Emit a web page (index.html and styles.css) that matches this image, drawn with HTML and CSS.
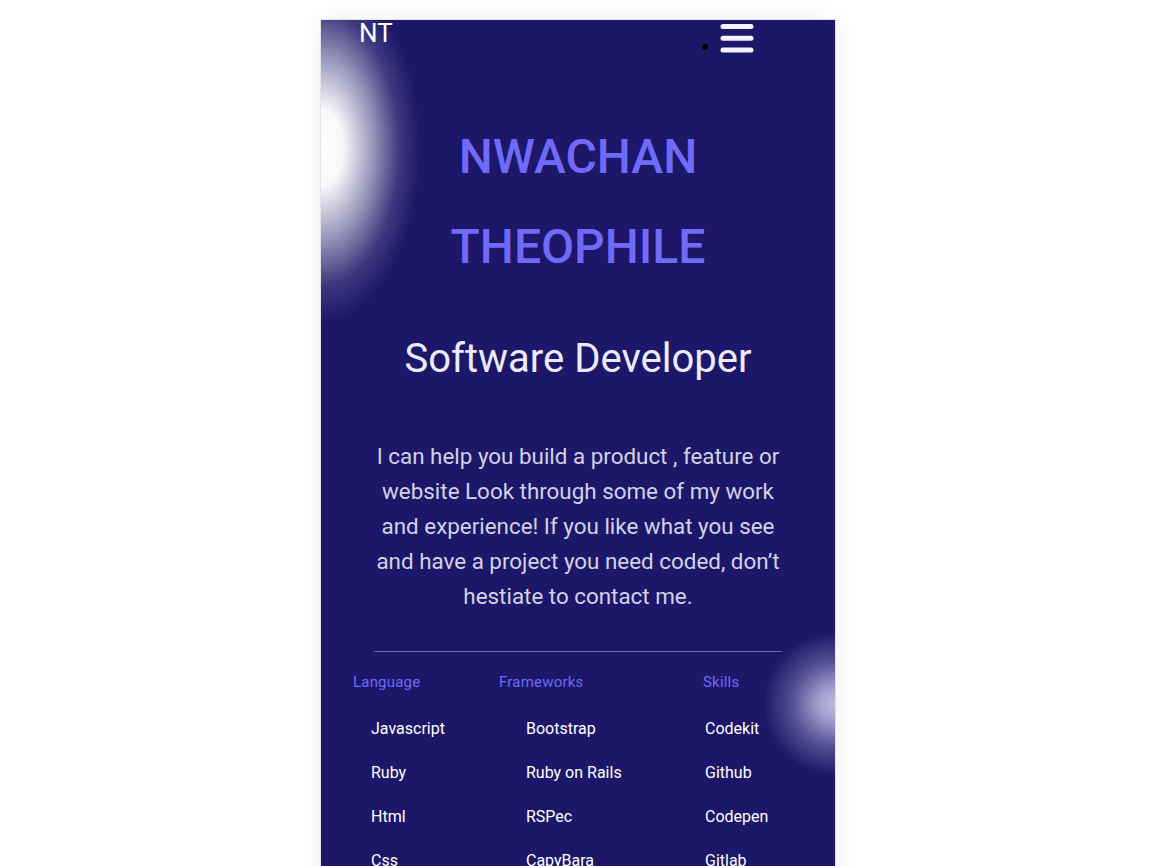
FILE: index.html
```html
<!DOCTYPE html>
<html lang="en">
<head>
<meta charset="utf-8">
<title>Nwachan Theophile</title>
<link rel="stylesheet" href="styles.css">
</head>
<body>
<main class="phone">
  <header class="topbar">
    <div class="logo">NT</div>
    <nav class="menu">
      <span class="dot"></span>
      <svg class="bars" width="34" height="30" viewBox="0 0 34 30" aria-hidden="true">
        <rect x="0.5" y="0" width="33" height="5" rx="2.5" fill="#f4f3ff"/>
        <rect x="0.5" y="11.7" width="33" height="5" rx="2.5" fill="#f4f3ff"/>
        <rect x="0.5" y="23.4" width="33" height="5" rx="2.5" fill="#f4f3ff"/>
      </svg>
    </nav>
  </header>

  <section class="hero">
    <h1 class="name">NWACHAN<br>THEOPHILE</h1>
    <h2 class="role">Software Developer</h2>
    <p class="intro">I can help you build a product , feature or website Look through some of my work and experience! If you like what you see and have a project you need coded, don’t hestiate to contact me.</p>
  </section>

  <hr class="rule">

  <section class="stack">
    <div class="col col-lang">
      <h3 class="col-title">Language</h3>
      <ul class="items">
        <li>Javascript</li>
        <li>Ruby</li>
        <li>Html</li>
        <li>Css</li>
      </ul>
    </div>
    <div class="col col-fw">
      <h3 class="col-title">Frameworks</h3>
      <ul class="items">
        <li>Bootstrap</li>
        <li>Ruby on Rails</li>
        <li>RSPec</li>
        <li>CapyBara</li>
      </ul>
    </div>
    <div class="col col-skills">
      <h3 class="col-title">Skills</h3>
      <ul class="items">
        <li>Codekit</li>
        <li>Github</li>
        <li>Codepen</li>
        <li>Gitlab</li>
      </ul>
    </div>
  </section>
</main>
</body>
</html>
```

FILE: styles.css
```css
html, body {
  margin: 0;
  padding: 0;
  background: #ffffff;
}

body {
  font-family: Roboto, "Liberation Sans", Arial, sans-serif;
}

.phone {
  width: 514px;
  margin: 20px 0 0 321px;
  padding-bottom: 60px;
  box-shadow: 0 0 0 1px #e4e4e8, 0 0 26px rgba(0, 0, 0, 0.07);
  background:
    radial-gradient(ellipse 100px 175px at 0 128px,
      rgba(255,255,255,1) 0%,
      rgba(255,255,255,0.97) 22%,
      rgba(255,255,255,0.55) 52%,
      rgba(255,255,255,0.15) 78%,
      rgba(255,255,255,0) 100%),
    radial-gradient(circle 72px at 514px 684px,
      rgba(200,200,232,0.92) 0%,
      rgba(195,195,230,0.8) 22%,
      rgba(185,185,225,0.35) 60%,
      rgba(185,185,225,0) 100%),
    #1c1768;
  overflow: hidden;
}

.topbar {
  display: flex;
  justify-content: space-between;
  align-items: flex-start;
  padding: 0 81px 0 38px;
  height: 40px;
}

.logo {
  color: #ffffff;
  font-size: 26px;
  line-height: 26px;
}

.menu {
  display: flex;
  align-items: flex-start;
  gap: 12px;
  padding-top: 4px;
}

.dot {
  width: 6px;
  height: 6px;
  border-radius: 50%;
  background: #000;
  margin-top: 20px;
}

.bars {
  display: block;
}

.hero {
  text-align: center;
  padding: 0 50px;
}

.name {
  margin: 52px 0 0;
  font-size: 48px;
  line-height: 90px;
  font-weight: 500;
  color: #6f6af8;
}

.role {
  margin: 44px 0 0;
  font-size: 40px;
  line-height: 46px;
  font-weight: 400;
  color: #ecebfd;
}

.intro {
  margin: 57px 0 0;
  font-size: 22.4px;
  line-height: 35px;
  color: #d3d2e6;
}

.rule {
  margin: 37px 53px 0;
  border: 0;
  border-top: 1px solid #6f6ba6;
  height: 0;
}

.stack {
  display: grid;
  grid-template-columns: 146px 204px 1fr;
  padding: 17px 0 0 32px;
}

.col-title {
  margin: 0;
  font-size: 15px;
  line-height: 26px;
  font-weight: 400;
  color: #6f6af8;
  letter-spacing: 0.2px;
}

.items {
  list-style: none;
  margin: 12px 0 0;
  padding: 0;
}

.items li {
  font-size: 16px;
  line-height: 44px;
  color: #ffffff;
}

.col-lang .items { padding-left: 18px; }
.col-fw .items { padding-left: 27px; }
.col-skills .items { padding-left: 2px; }
```
